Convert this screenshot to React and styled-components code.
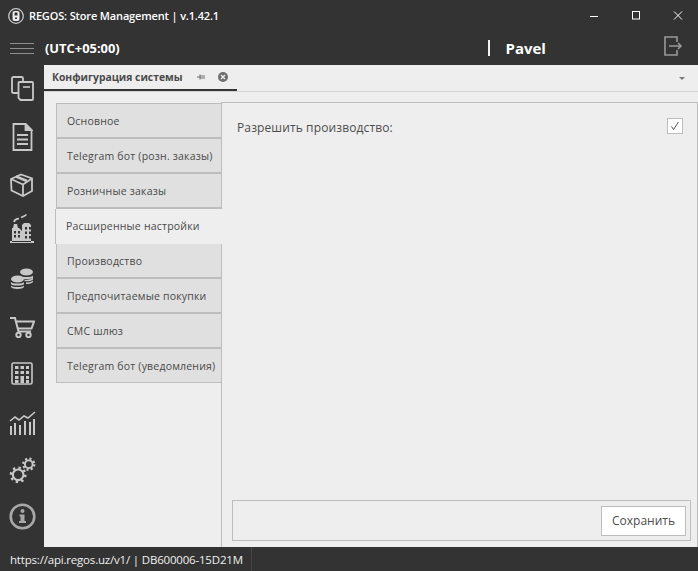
import styled, { createGlobalStyle } from "styled-components";

const GlobalStyle = createGlobalStyle`
  html, body {
    margin: 0;
    padding: 0;
    background: #333333;
  }
  * {
    box-sizing: border-box;
  }
`;

const Wrap = styled.div`
  width: 698px;
  height: 571px;
  display: flex;
  flex-direction: column;
  overflow: hidden;
  background-color: #333333;
  font-family: "Open Sans", "Noto Sans", sans-serif;
`;

const TitleBar = styled.div`
  height: 31px;
  display: flex;
  align-items: center;
  padding-left: 8px;
  color: #ffffff;
`;
const AppTitle = styled.div`
  margin-left: 5px;
  font-size: 11px;
  letter-spacing: -0.15px;
  font-weight: 600;
  white-space: nowrap;
  flex: 1;
`;
const WinButtons = styled.div`
  display: flex;
  align-items: center;
  margin-right: -1px;
`;
const WinButton = styled.div`
  width: 42px;
  height: 16px;
  display: flex;
  align-items: center;
  justify-content: center;
`;

const Header = styled.div`
  height: 34px;
  display: flex;
  align-items: center;
  color: #ffffff;
  font-weight: 700;
`;
const Burger = styled.div`
  width: 24px;
  height: 11px;
  margin: 0 11px 0 10px;
  border-top: 1px solid #8f8f8f;
  border-bottom: 1px solid #8f8f8f;
  position: relative;
  &::after {
    content: "";
    position: absolute;
    left: 0;
    right: 0;
    top: 4px;
    height: 1px;
    background: #8f8f8f;
  }
`;
const TimeZone = styled.div`
  font-size: 12.9px;
  width: 443px;
`;
const Divider = styled.div`
  width: 1.5px;
  height: 16px;
  background: #f2f2f2;
`;
const UserName = styled.div`
  margin-left: 16px;
  font-size: 15px;
  flex: 1;
`;
const Logout = styled.div`
  width: 20px;
  height: 20px;
  margin: -4px 15px 0 0;
`;

const Main = styled.div`
  flex: 1;
  display: flex;
  min-height: 0;
`;
const Sidebar = styled.div`
  width: 44px;
  display: flex;
  flex-direction: column;
  align-items: center;
  flex-shrink: 0;
`;
const SideIcon = styled.div`
  margin-top: ${(props) => props.$top}px;
  width: 44px;
  display: flex;
  justify-content: center;
  svg {
    display: block;
  }
`;

const Content = styled.div`
  flex: 1;
  background: #eeeeee;
  display: flex;
  flex-direction: column;
  min-width: 0;
`;
const DocTabs = styled.div`
  height: 27px;
  display: flex;
  border-bottom: 1px solid #d4d4d4;
  position: relative;
`;
const DocTab = styled.div`
  width: 193px;
  height: 26px;
  padding-left: 8px;
  display: flex;
  align-items: center;
  border-bottom: 2px solid #333333;
  font-size: 10.35px;
  font-weight: 700;
  color: #4a4a4a;
  white-space: nowrap;
`;
const PinIcon = styled.div`
  margin-left: 13px;
  width: 10px;
  height: 10px;
  display: flex;
`;
const CloseDot = styled.div`
  margin-left: 12px;
  width: 10px;
  height: 10px;
  display: flex;
`;
const Caret = styled.div`
  position: absolute;
  right: 13px;
  top: 12px;
  border-left: 3.5px solid transparent;
  border-right: 3.5px solid transparent;
  border-top: 3.5px solid #7a7a7a;
`;

const Body = styled.div`
  flex: 1;
  display: flex;
  padding-top: 10px;
  min-height: 0;
`;
const TabList = styled.div`
  width: 178px;
  padding: 1px 0 0 12px;
  flex-shrink: 0;
  display: flex;
  flex-direction: column;
  position: relative;
  z-index: 1;
`;
const SideTab = styled.div`
  height: ${(props) => (props.$first ? "36px" : props.$last ? "34px" : "35px")};
  display: flex;
  align-items: center;
  white-space: nowrap;
  font-size: 10.5px;
  letter-spacing: 0.2px;
  color: #4a4a4a;
  border: 1px solid #bdbdbd;
  border-top-width: ${(props) => (props.$first ? "1px" : "0")};
  border-bottom-width: ${(props) => (props.$last ? "1px" : "2px")};
  background: #e0e0e0;
  padding-left: 10px;
  ${(props) =>
    props.$active &&
    `
    background: #eeeeee;
    margin-left: -1px;
    border-right-color: #eeeeee;
    border-bottom-width: 0;
    padding-bottom: 2px;
  `}
`;

const Panel = styled.div`
  flex: 1;
  display: flex;
  flex-direction: column;
  border: 1px solid #bdbdbd;
  border-bottom: 0;
  margin-left: -1px;
  padding: 0 6px 6px 10px;
  min-width: 0;
`;
const Row = styled.div`
  height: 46px;
  padding: 0 8px 0 5px;
  display: flex;
  align-items: center;
  justify-content: space-between;
`;
const RowLabel = styled.span`
  margin-top: 2px;
  font-size: 12px;
  letter-spacing: 0.12px;
  color: #4d4d4d;
`;
const CheckBox = styled.div`
  width: 16px;
  height: 16px;
  background: #ffffff;
  border: 1px solid #bdbdbd;
  display: flex;
  align-items: center;
  justify-content: center;
`;
const Spacer = styled.div`
  flex: 1;
`;
const Footer = styled.div`
  height: 41px;
  border: 1px solid #bdbdbd;
  display: flex;
  align-items: center;
  justify-content: flex-end;
  padding-right: 4px;
`;
const SaveButton = styled.button`
  width: 85px;
  height: 30px;
  background: #ffffff;
  border: 1px solid #bdbdbd;
  font-family: inherit;
  font-size: 12px;
  color: #4d4d4d;
  padding: 0;
`;

const StatusBar = styled.div`
  height: 24px;
  display: flex;
  align-items: center;
  color: #f0f0f0;
  font-size: 11.5px;
  letter-spacing: -0.19px;
  flex-shrink: 0;
`;
const StatusText = styled.div`
  width: 252px;
  height: 24px;
  padding-left: 10px;
  display: flex;
  align-items: center;
  border-right: 1px solid #454545;
  white-space: nowrap;
`;

const stroke = { fill: "none", stroke: "#c8c8c8", strokeWidth: 1.8 };

// top = gap above each icon, the column is not evenly spaced
const icons = [
  {
    top: 11,
    svg: (
      <svg width="23" height="25" viewBox="0 0 23 25" {...stroke}>
        <path d="M7 17H2.500Q1 17 1 15.500V2.500Q1 1 2.500 1h8Q12 1 12 2.500V6" />
        <path d="M8.500 6h12.500q1 0 1 1v16q0 1-1 1H9.500l-2-2V7q0-1 1-1z" />
        <path d="M12 11h7" strokeWidth="1.600" />
      </svg>
    ),
  },
  {
    top: 22,
    svg: (
      <svg width="21" height="28" viewBox="0 0 21 28" {...stroke}>
        <path d="M1.500 1h12l6 6v20h-18z" />
        <path d="M13.500 1v6h6z" fill="#c8c8c8" />
        <path d="M5 12h11M5 16.500h11M5 21h11" strokeWidth="2" />
      </svg>
    ),
  },
  {
    top: 22,
    svg: (
      <svg width="24" height="24" viewBox="0 0 24 24" {...stroke}>
        <path d="M11 1.500l11 4v12.500l-9 5-11.500-5.500L1 6z" />
        <path d="M1 6l12 5.500 9-6M13 11.500V23" />
        <path d="M6 3.500l11 4.500" strokeWidth="2.500" />
      </svg>
    ),
  },
  {
    top: 16,
    svg: (
      <svg width="26" height="31" viewBox="0 0 26 31">
        <path fill="#c8c8c8" fillRule="evenodd" d="M3 29V15h1l1-4h3l1 4h1l3 3v-6l2-2h5l2 2v17zM5 18v2.500h2V18zm4 0v2.500h2V18zm7-4v2.500h2V14zm4 0v2.500h2V14zM5 22v2.500h2V22zm4 0v2.500h2V22zm7-3.500V21h2v-2.500zm4 0V21h2v-2.500zM16 23v2.500h2V23zm4 0v2.500h2V23zM1 28h24v2H1z" />
        <path d="M5 9c.5-3 2.500-3 5-3.500M12 4.500c2-1 4-1.500 5.500-3" fill="none" stroke="#c8c8c8" strokeWidth="1.700" />
      </svg>
    ),
  },
  {
    top: 24,
    svg: (
      <svg width="24" height="23" viewBox="0 0 24 23" fill="#c8c8c8">
        <ellipse cx="16.500" cy="4" rx="6.500" ry="3.500" />
        <path d="M10 7.500c1 2 12 2 13 0v2c-1 2-12 2-13 0zM14 11.500c3 .5 8 0 9-2v2c-1 1.500-5 2-8 1.800zM16 14.500c3 0 6-.5 7-2v1.500c-1 1.500-4 2-7 2z" />
        <ellipse cx="7.500" cy="11" rx="6.500" ry="3.500" />
        <path d="M1 14c1 2 12 2 13 0v2c-1 2-12 2-13 0zM1 17.500c1 2 12 2 13 0v1.500c-1 2.500-12 2.500-13 0z" />
      </svg>
    ),
  },
  {
    top: 26,
    svg: (
      <svg width="25" height="21" viewBox="0 0 25 21" fill="none" stroke="#c8c8c8" strokeWidth="2">
        <path d="M0 1h5l3.500 13.500H21" />
        <path d="M6 4.500h18l-2.500 7H8" />
        <circle cx="8.500" cy="18" r="2.200" />
        <circle cx="18.500" cy="18" r="2.200" />
      </svg>
    ),
  },
  {
    top: 24,
    svg: (
      <svg width="22" height="23" viewBox="0 0 22 23">
        <rect x="1" y="1" width="20" height="21" rx="1.500" fill="none" stroke="#c8c8c8" strokeWidth="1.600" />
        <path fill="#c8c8c8" d="M4 4h3.500v3H4zm5.500 0H13v3H9.500zM15 4h3v3h-3zM4 9h3.500v3H4zm5.500 0H13v3H9.500zM15 9h3v3h-3zM4 14h3.500v3H4zm11 0h3v3h-3zM9.500 14H13v7H9.500zM4 18h3.500v3H4zm11 0h3v3h-3z" />
      </svg>
    ),
  },
  {
    top: 26,
    svg: (
      <svg width="27" height="24" viewBox="0 0 27 24">
        <path fill="#c8c8c8" d="M1 15h2v9H1zm4-3h2v12H5zm5 2h2v10h-2zm5-4h2v14h-2zm5 1h2v13h-2zm4-3h2v16h-2z" />
        <path d="M1 10l5-4 4 3 5-4 4 2 7-6" fill="none" stroke="#c8c8c8" strokeWidth="1.600" />
      </svg>
    ),
  },
  {
    top: 22,
    svg: (
      <svg width="27" height="27" viewBox="0 0 28 28" fill="none" stroke="#c8c8c8">
        <circle cx="9.500" cy="18.500" r="5.500" strokeWidth="2.200" />
        <circle cx="9.500" cy="18.500" r="7.500" strokeWidth="2.500" strokeDasharray="2.500 3.400" />
        <circle cx="20.500" cy="7.500" r="4" strokeWidth="2" />
        <circle cx="20.500" cy="7.500" r="5.800" strokeWidth="2.200" strokeDasharray="2.200 2.350" />
      </svg>
    ),
  },
  {
    top: 19,
    svg: (
      <svg width="27" height="27" viewBox="0 0 27 27">
        <circle cx="13.500" cy="13.500" r="11.800" fill="none" stroke="#a8a8a8" strokeWidth="2.600" />
        <circle cx="13.500" cy="8" r="2" fill="#a8a8a8" />
        <path fill="#a8a8a8" d="M10.500 11.500h5V18H17v2h-7v-2h1.500v-4.500h-1z" />
      </svg>
    ),
  },
];

const tabs = [
  "Основное",
  "Telegram бот (розн. заказы)",
  "Розничные заказы",
  "Расширенные настройки",
  "Производство",
  "Предпочитаемые покупки",
  "СМС шлюз",
  "Telegram бот (уведомления)",
];

function App() {
  return (
    <Wrap>
      <GlobalStyle />
      <TitleBar>
        <svg width="16" height="16" viewBox="0 0 16 16">
          <circle cx="8" cy="8" r="7.300" fill="#333" stroke="#c8c8c8" strokeWidth="1.300" />
          <rect x="4.500" y="3" width="7" height="10" rx="2" fill="#eeeeee" />
          <rect x="6.500" y="4.500" width="3" height="3" fill="#333" />
          <rect x="7" y="9.500" width="2" height="1.500" fill="#333" />
        </svg>
        <AppTitle>REGOS: Store Management | v.1.42.1</AppTitle>
        <WinButtons>
          <WinButton>
            <svg width="10" height="10" viewBox="0 0 10 10">
              <path d="M1 5.500h8" stroke="#fff" />
            </svg>
          </WinButton>
          <WinButton>
            <svg width="10" height="10" viewBox="0 0 10 10">
              <rect x="1.500" y=".5" width="7" height="7.500" fill="none" stroke="#fff" />
            </svg>
          </WinButton>
          <WinButton>
            <svg width="10" height="10" viewBox="0 0 10 10">
              <path d="M1 .5l8 8M9 .5l-8 8" stroke="#fff" />
            </svg>
          </WinButton>
        </WinButtons>
      </TitleBar>
      <Header>
        <Burger />
        <TimeZone>(UTC+05:00)</TimeZone>
        <Divider />
        <UserName>Pavel</UserName>
        <Logout>
          <svg width="20" height="20" viewBox="0 0 20 20" fill="none" stroke="#999999" strokeWidth="1.600">
            <path d="M14 6V1H2v18h12v-5" />
            <path d="M6 10h12M15 7l3 3-3 3" />
          </svg>
        </Logout>
      </Header>
      <Main>
        <Sidebar>
          {icons.map((icon, i) => (
            <SideIcon key={i} $top={icon.top}>
              {icon.svg}
            </SideIcon>
          ))}
        </Sidebar>
        <Content>
          <DocTabs>
            <DocTab>
              Конфигурация системы
              <PinIcon>
                <svg width="10" height="10" viewBox="0 0 10 10" fill="#6e6e6e">
                  <path d="M1 4.500h2.500v1H1zM3.500 2.500h1v5h-1zM4.500 3.500H9v1H4.500zM4.500 5.500H9v1H4.500z" />
                </svg>
              </PinIcon>
              <CloseDot>
                <svg width="10" height="10" viewBox="0 0 10 10">
                  <circle cx="5" cy="5" r="5" fill="#6e6e6e" />
                  <path d="M3 3l4 4M7 3l-4 4" stroke="#eee" strokeWidth="1.300" />
                </svg>
              </CloseDot>
            </DocTab>
            <Caret />
          </DocTabs>
          <Body>
            <TabList>
              {tabs.map((t, i) => (
                <SideTab key={t} $first={i === 0} $last={i === tabs.length - 1} $active={i === 3}>
                  {t}
                </SideTab>
              ))}
            </TabList>
            <Panel>
              <Row>
                <RowLabel>Разрешить производство:</RowLabel>
                <CheckBox>
                  <svg width="10" height="10" viewBox="0 0 10 10">
                    <path d="M1.500 5.500l2 3L8.500 1" fill="none" stroke="#555" />
                  </svg>
                </CheckBox>
              </Row>
              <Spacer />
              <Footer>
                <SaveButton>Сохранить</SaveButton>
              </Footer>
            </Panel>
          </Body>
        </Content>
      </Main>
      <StatusBar>
        <StatusText>https://api.regos.uz/v1/ | DB600006-15D21M</StatusText>
      </StatusBar>
    </Wrap>
  );
}

export default App;
